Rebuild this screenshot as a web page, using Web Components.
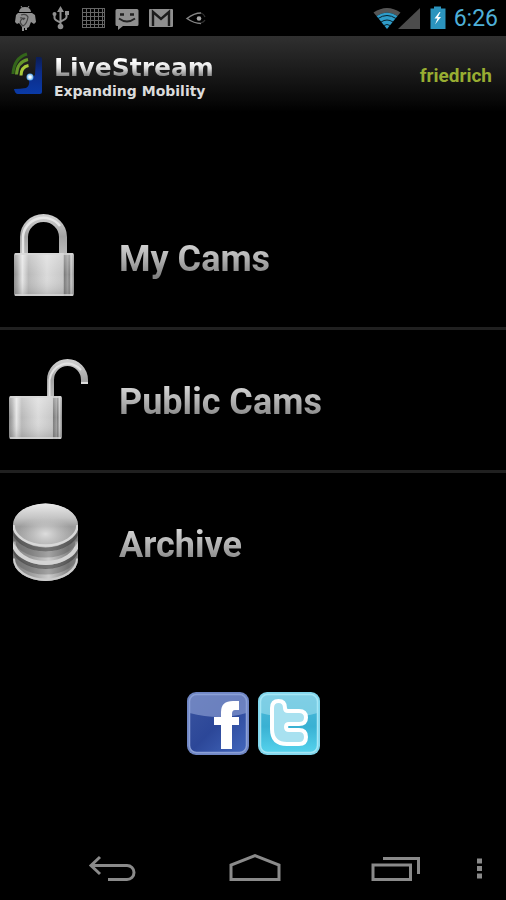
<!DOCTYPE html>
<html lang="en">
<head>
<meta charset="utf-8">
<meta name="viewport" content="width=device-width, initial-scale=1">
<title>LiveStream</title>
<style>
  html { background: #000; }
  body { margin: 0; background: #000; color: #bbb; font-family: Roboto, "Liberation Sans", sans-serif; }
</style>
</head>
<body>
<live-app>
  <status-bar slot="status">6:26</status-bar>
  <app-header slot="header"><span slot="user">friedrich</span></app-header>
  <menu-row icon="locked">My Cams</menu-row>
  <menu-row icon="unlocked">Public Cams</menu-row>
  <menu-row icon="archive" last>Archive</menu-row>
  <social-links slot="social"></social-links>
  <nav-bar slot="nav"></nav-bar>
</live-app>

<script>
const define = (name, html, setup) => {
  const template = document.createElement('template');
  template.innerHTML = html;
  customElements.define(name, class extends HTMLElement {
    constructor() {
      super();
      this.attachShadow({ mode: 'open' }).append(template.content.cloneNode(true));
    }
    connectedCallback() { if (setup) setup(this, this.shadowRoot); }
  });
};

define('live-app', `
<style>
  :host { display: flex; flex-direction: column; min-height: 100vh; background: #000; }
  main { flex: 1; display: flex; flex-direction: column; padding-top: 75px; }
  nav { display: block; }
</style>
<slot name="status"></slot>
<slot name="header"></slot>
<main>
  <nav aria-label="Cameras"><slot></slot></nav>
  <slot name="social"></slot>
</main>
<slot name="nav"></slot>`);

define('status-bar', `
<style>
  :host { display: flex; align-items: center; justify-content: space-between; height: 36px; padding: 0 8px 0 12px; background: #000; }
  .group { display: flex; align-items: center; }
  svg { display: block; }
  time { font-size: 23px; line-height: 36px; margin-left: 7px; padding-top: 2px; color: #4fb0d8; }
</style>
<div class="group">
  <svg width="198" height="36" viewBox="12 0 198 36" fill="#8f8f8f" stroke="none" aria-hidden="true">
    <path d="M19 12a6 5 0 0 1 12 0z"/>
    <path d="M21 6l2 3M29 6l-2 3" stroke="#8f8f8f"/>
    <path d="M18 13h14l3 2 1 7-2 2-3-2-2 5-2 1v2h-2v-2h-1v3h-2v-4l-3-4-2 1-2-2 1-7z"/>
    <path d="M21 15q5-2 7 2-1 7-5 9-4-3-2-6 3-3 4-1M20 18q3-1 4 2" fill="none" stroke="#444" stroke-width="1.2"/>
    <g fill="none" stroke="#8f8f8f" stroke-width="2">
      <path d="M60.500 10V25M54.500 15v3q0 2 6 4.500M66.500 14v3q0 2-6 4.500"/>
    </g>
    <path d="M57 12l3.500-6 3.500 6zM65 11h4v4h-4z"/>
    <circle cx="54.500" cy="14" r="2"/><circle cx="60.500" cy="26.500" r="2.800"/>
    <path d="M82 8.500h23M82 12.500h23M82 16.500h23M82 20.500h23M82 24.500h23M82 27.500h23M82.500 8v20M86.500 8v20M90.500 8v20M94.500 8v20M98.500 8v20M102.500 8v20M104.500 8v20" stroke="#666" fill="none"/>
    <path d="M117 9h20q1.500 0 1.500 1.500v14q0 1.500-1.500 1.500h-14l-5 4v-4h-1q-1.500 0-1.500-1.500v-14q0-1.500 1.500-1.500z"/>
    <path d="M120 14.500h4M130 14.500h4" stroke="#222" stroke-width="2.500"/>
    <path d="M119 18.500q8 6 16 0" stroke="#222" stroke-width="1.800" fill="none"/>
    <rect x="149" y="9" width="24" height="18" rx="1"/>
    <path d="M153 26V12l8 7 8-7v14" fill="none" stroke="#1c1c1c" stroke-width="2.400"/>
    <path d="M201 13q-7 0-14 5.500 7 5 14 5" fill="none" stroke="#858585" stroke-width="1.500"/>
    <path d="M201 13q3 1 4 4M205 20q-1 2-4 3" fill="none" stroke="#333" stroke-width="1.200"/>
    <circle cx="199" cy="18.500" r="2.300" fill="#aaa"/>
  </svg>
</div>
<div class="group">
  <svg width="75" height="36" viewBox="372 0 75 36" aria-hidden="true">
    <path d="M373.500 12.500q13.500-9 27 0l-3 3.500q-10.500-7-21 0z" fill="#555"/>
    <path d="M376.500 16q10.500-7 21 0L387 29z" fill="#2f9cc9"/>
    <path d="M378 18.500q9-6 18 0M381 22q6-4 12 0M384 25.500q3-2 6 0" fill="none" stroke="#07202b" stroke-width="1"/>
    <path d="M420 8v21h-22z" fill="#4c4c4c"/>
    <path d="M434 6.500h7v2h4.500V29H430.500V8.500h3.500z" fill="#2b94be"/>
    <path d="M439.500 12l-5 6.500h3l-2.500 6 6-7.500h-3l2.500-5z" fill="#fff"/>
  </svg>
  <time><slot></slot></time>
</div>`);

define('app-header', `
<style>
  :host { display: flex; align-items: center; justify-content: space-between; box-sizing: border-box; height: 76px; padding: 0 14px 0 10px; background: linear-gradient(#303030, #222 30%, #080808 85%, #000); }
  .brand { display: flex; align-items: center; gap: 10px; }
  svg { display: block; }
  .name { padding-top: 10px; }
  h1, p { margin: 0; font-family: "DejaVu Sans", "Liberation Sans", sans-serif; font-weight: 700; }
  h1 { font-size: 25px; line-height: 24px; background: linear-gradient(#fff 20%, #e0e0e0 50%, #808080 85%); -webkit-background-clip: text; background-clip: text; color: transparent; }
  p { font-size: 14px; line-height: 22px; color: #dcdcdc; }
  a { color: #98ad32; font-size: 19px; line-height: 24px; font-weight: 700; text-decoration: none; padding-top: 4px; }
</style>
<div class="brand">
  <svg width="34" height="44" viewBox="10 52 34 44" aria-hidden="true">
    <defs>
      <linearGradient id="b" x1="0" y1="0" x2="0" y2="1"><stop offset="0" stop-color="#0b1d55"/><stop offset=".4" stop-color="#0c2c88"/><stop offset="1" stop-color="#0a3aa6"/></linearGradient>
      <radialGradient id="w"><stop offset=".3" stop-color="#f4fbff"/><stop offset="1" stop-color="#4aa0e8"/></radialGradient>
    </defs>
    <path d="M36 57h4q2 0 2 2v33q0 2-2 2H18q-3 0-4-5 6 0 12-1 4-2 3-8l6-5z" fill="url(#b)"/>
    <path d="M13 74Q14 58 27 54" fill="none" stroke="#33651a" stroke-width="3"/>
    <path d="M16.500 74.500Q17 62 28 59.500" fill="none" stroke="#65962a" stroke-width="3"/>
    <path d="M21 75.500Q21 67 28.500 65.500" fill="none" stroke="#a8c93a" stroke-width="3"/>
    <circle cx="30" cy="77" r="3.500" fill="url(#w)"/>
  </svg>
  <div class="name"><h1>LiveStream</h1><p>Expanding Mobility</p></div>
</div>
<a href="#account"><slot name="user"></slot></a>`);

const metal = `
  <defs>
    <linearGradient id="body"><stop offset="0" stop-color="#8a8a8a"/><stop offset=".06" stop-color="#aaa"/><stop offset=".14" stop-color="#e6e6e6"/><stop offset=".24" stop-color="#b8b8b8"/><stop offset=".55" stop-color="#dadada"/><stop offset=".82" stop-color="#c6c6c6"/><stop offset=".84" stop-color="#7c7c7c"/><stop offset=".9" stop-color="#a0a0a0"/><stop offset=".92" stop-color="#777"/><stop offset=".95" stop-color="#ccc"/><stop offset="1" stop-color="#8a8a8a"/></linearGradient>
    <linearGradient id="shade" x1="0" y1="0" x2="0" y2="1"><stop offset="0" stop-color="#fff" stop-opacity=".3"/><stop offset=".5" stop-color="#fff" stop-opacity="0"/><stop offset="1" stop-color="#555" stop-opacity=".25"/></linearGradient>
    <linearGradient id="bar" x1="0" y1="0" x2="0" y2="1"><stop offset="0" stop-color="#ccc"/><stop offset=".5" stop-color="#a4a4a4"/><stop offset="1" stop-color="#bbb"/></linearGradient>
    <linearGradient id="disc" x1="0" y1="0" x2="0" y2="1"><stop offset="0" stop-color="#ececec"/><stop offset=".35" stop-color="#c4c4c4"/><stop offset=".55" stop-color="#9c9c9c"/><stop offset="1" stop-color="#aaa"/></linearGradient>
    <radialGradient id="glow" cx=".5" cy=".72" r=".42"><stop offset="0" stop-color="#ddd"/><stop offset="1" stop-color="#ccc" stop-opacity="0"/></radialGradient>
    <linearGradient id="side"><stop offset="0" stop-color="#808080"/><stop offset=".25" stop-color="#989898"/><stop offset=".55" stop-color="#ccc"/><stop offset=".85" stop-color="#868686"/><stop offset="1" stop-color="#999"/></linearGradient>
    <clipPath id="stack"><path d="M13 24A32.500 21.500 0 0 1 78 24V58A32.500 22 0 0 1 13 58z"/></clipPath>
  </defs>`;
const icons = {
  locked: `
    <path d="M24 40V22A19.500 19 0 0 1 63 22V40" fill="none" stroke="url(#bar)" stroke-width="8"/>
    <path d="M23 38V22A20.500 20 0 0 1 60 11" fill="none" stroke="#e6e6e6" stroke-width="2.500"/>
    <rect x="14" y="38" width="60" height="43" rx="2" fill="url(#body)"/>
    <rect x="14" y="38" width="60" height="43" rx="2" fill="url(#shade)"/>
    <path d="M15 39h58M15 80h58" stroke="#d8d8d8" stroke-width="1.500"/>`,
  unlocked: `
    <path d="M50.500 40V22A17 17.500 0 0 1 84.500 22V26" fill="none" stroke="url(#bar)" stroke-width="7"/>
    <path d="M49.500 38V22A18 18.500 0 0 1 81 12" fill="none" stroke="#e2e2e2" stroke-width="2"/>
    <path d="M81 25h7" stroke="#ddd" stroke-width="2"/>
    <rect x="9" y="38" width="53" height="43" rx="2" fill="url(#body)"/>
    <rect x="9" y="38" width="53" height="43" rx="2" fill="url(#shade)"/>
    <path d="M10 39h51M10 80h51" stroke="#d8d8d8" stroke-width="1.500"/>`,
  archive: `
    <g clip-path="url(#stack)" fill="none">
      <rect x="13" y="2" width="65" height="79" fill="url(#side)"/>
      <path d="M13.500 49A32 21.500 0 0 0 77.500 49" stroke="#444" stroke-width="6" opacity=".3"/>
      <path d="M13.500 57.500A32 21.500 0 0 0 77.500 57.500" stroke="#ccc" stroke-width="3"/>
      <path d="M13.500 44.500A32 21.500 0 0 0 77.500 44.500" stroke="#444" stroke-width="4" opacity=".65"/>
      <path d="M13.500 40.500A32 21.500 0 0 0 77.500 40.500" stroke="#d4d4d4" stroke-width="4"/>
      <path d="M13.500 32A32 21.500 0 0 0 77.500 32" stroke="#444" stroke-width="6" opacity=".3"/>
      <path d="M13.500 27A32 21.500 0 0 0 77.500 27" stroke="#444" stroke-width="4" opacity=".65"/>
      <ellipse cx="45.500" cy="23.500" rx="32.500" ry="21.500" fill="url(#disc)"/>
      <ellipse cx="45.500" cy="23.500" rx="32.500" ry="21.500" fill="url(#glow)"/>
      <path d="M13.500 24A32 20.500 0 0 0 77.500 24" stroke="#d8d8d8" stroke-width="2.500"/>
    </g>`
};

define('menu-row', `
<style>
  :host { display: block; border-bottom: 3px solid #202020; }
  :host([last]) { border-bottom-color: transparent; }
  a { display: flex; align-items: center; gap: 29px; min-height: 140px; text-decoration: none; }
  svg { display: block; flex: none; overflow: visible; }
  span { margin-top: 4px; font-size: 36px; line-height: 44px; font-weight: 700; background: linear-gradient(#d4d4d4 15%, #b0b0b0 50%, #808080 90%); -webkit-background-clip: text; background-clip: text; color: transparent; }
</style>
<a href="#"><svg width="90" height="84" viewBox="0 0 90 84" aria-hidden="true"></svg><span><slot></slot></span></a>`,
(host, root) => {
  const icon = host.getAttribute('icon');
  root.querySelector('a').setAttribute('href', '#' + icon);
  root.querySelector('svg').innerHTML = metal + icons[icon];
});

define('social-links', `
<style>
  :host { display: flex; justify-content: center; gap: 7px; padding: 75px 0 20px; }
  a, svg { display: block; }
</style>
<a href="#facebook" aria-label="Facebook">
  <svg width="64" height="66" viewBox="0 0 64 66">
    <defs><linearGradient id="f" x1="0" y1="0" x2="1" y2="1"><stop offset="0" stop-color="#3a54a0"/><stop offset=".5" stop-color="#2c4798"/><stop offset="1" stop-color="#4267bd"/></linearGradient></defs>
    <rect x="1" y="1" width="62" height="63" rx="9" fill="#6f86c4"/>
    <rect x="3.500" y="3.500" width="57" height="58" rx="7" fill="url(#f)"/>
    <path d="M10.500 4h43q7 0 7 7v11Q34 30 3.500 22V11q0-7 7-7z" fill="#8c9ed2" opacity=".65"/>
    <rect x="3.500" y="3.500" width="57" height="58" rx="7" fill="none" stroke="#8ba0d6" stroke-width="1.500"/>
    <path d="M35 58V34h-7v-8h7v-5Q35 10 47 10h6v9h-4q-3 0-3 4v3h7v8h-7v24z" fill="#fff"/>
  </svg>
</a>
<a href="#twitter" aria-label="Twitter">
  <svg width="64" height="66" viewBox="0 0 64 66">
    <defs><linearGradient id="t" x1="0" y1="0" x2="0" y2="1"><stop offset="0" stop-color="#51b9d8"/><stop offset=".55" stop-color="#39b1d3"/><stop offset="1" stop-color="#55d2ec"/></linearGradient></defs>
    <rect x="1" y="1" width="62" height="63" rx="9" fill="#80d6ec"/>
    <rect x="3.500" y="3.500" width="57" height="58" rx="7" fill="url(#t)"/>
    <path d="M10.500 4h43q7 0 7 7v11Q34 30 3.500 22V11q0-7 7-7z" fill="#a8e2f0" opacity=".55"/>
    <rect x="3.500" y="3.500" width="57" height="58" rx="7" fill="none" stroke="#a5e6f5" stroke-width="1.500"/>
    <path d="M15 17q0-7 6.500-7t6.500 7q0 3 3 3h11q7 0 7 6.500T42 33H32q-3 0-3 3t3 3h10q7 0 7 7t-7 7H30Q15 53 15 38z" fill="#a8e1f0" stroke="#fff" stroke-width="4" stroke-linejoin="round"/>
  </svg>
</a>`);

define('nav-bar', `
<style>
  :host { display: flex; align-items: center; height: 64px; padding: 0 11px 0 43px; background: #000; }
  .main { flex: 1; display: flex; justify-content: space-between; }
  button { display: block; border: 0; padding: 0; background: none; }
  .main button { width: 140px; display: flex; justify-content: center; }
  svg { display: block; fill: none; stroke: #8a8a8a; stroke-width: 3; }
</style>
<div class="main">
  <button type="button" aria-label="Back"><svg width="50" height="32" viewBox="0 2 50 32"><path d="M3 15.500H39a7 7 0 0 1 0 14H20M12 7L3 15.500 12 24"/></svg></button>
  <button type="button" aria-label="Home"><svg width="56" height="32" viewBox="0 2 56 32"><path d="M4 29.500V15L28 5.500 52 15V29.500z"/></svg></button>
  <button type="button" aria-label="Recent apps"><svg width="52" height="32" viewBox="0 2 52 32"><path d="M3 15h37.500v14.500H3zM13 8.500h35.500V24"/></svg></button>
</div>
<button type="button" aria-label="More options"><svg width="29" height="32" viewBox="0 2 29 32"><path d="M11 11h5M11 18.500h5M11 26h5" stroke-width="5"/></svg></button>`);
</script>
</body>
</html>
